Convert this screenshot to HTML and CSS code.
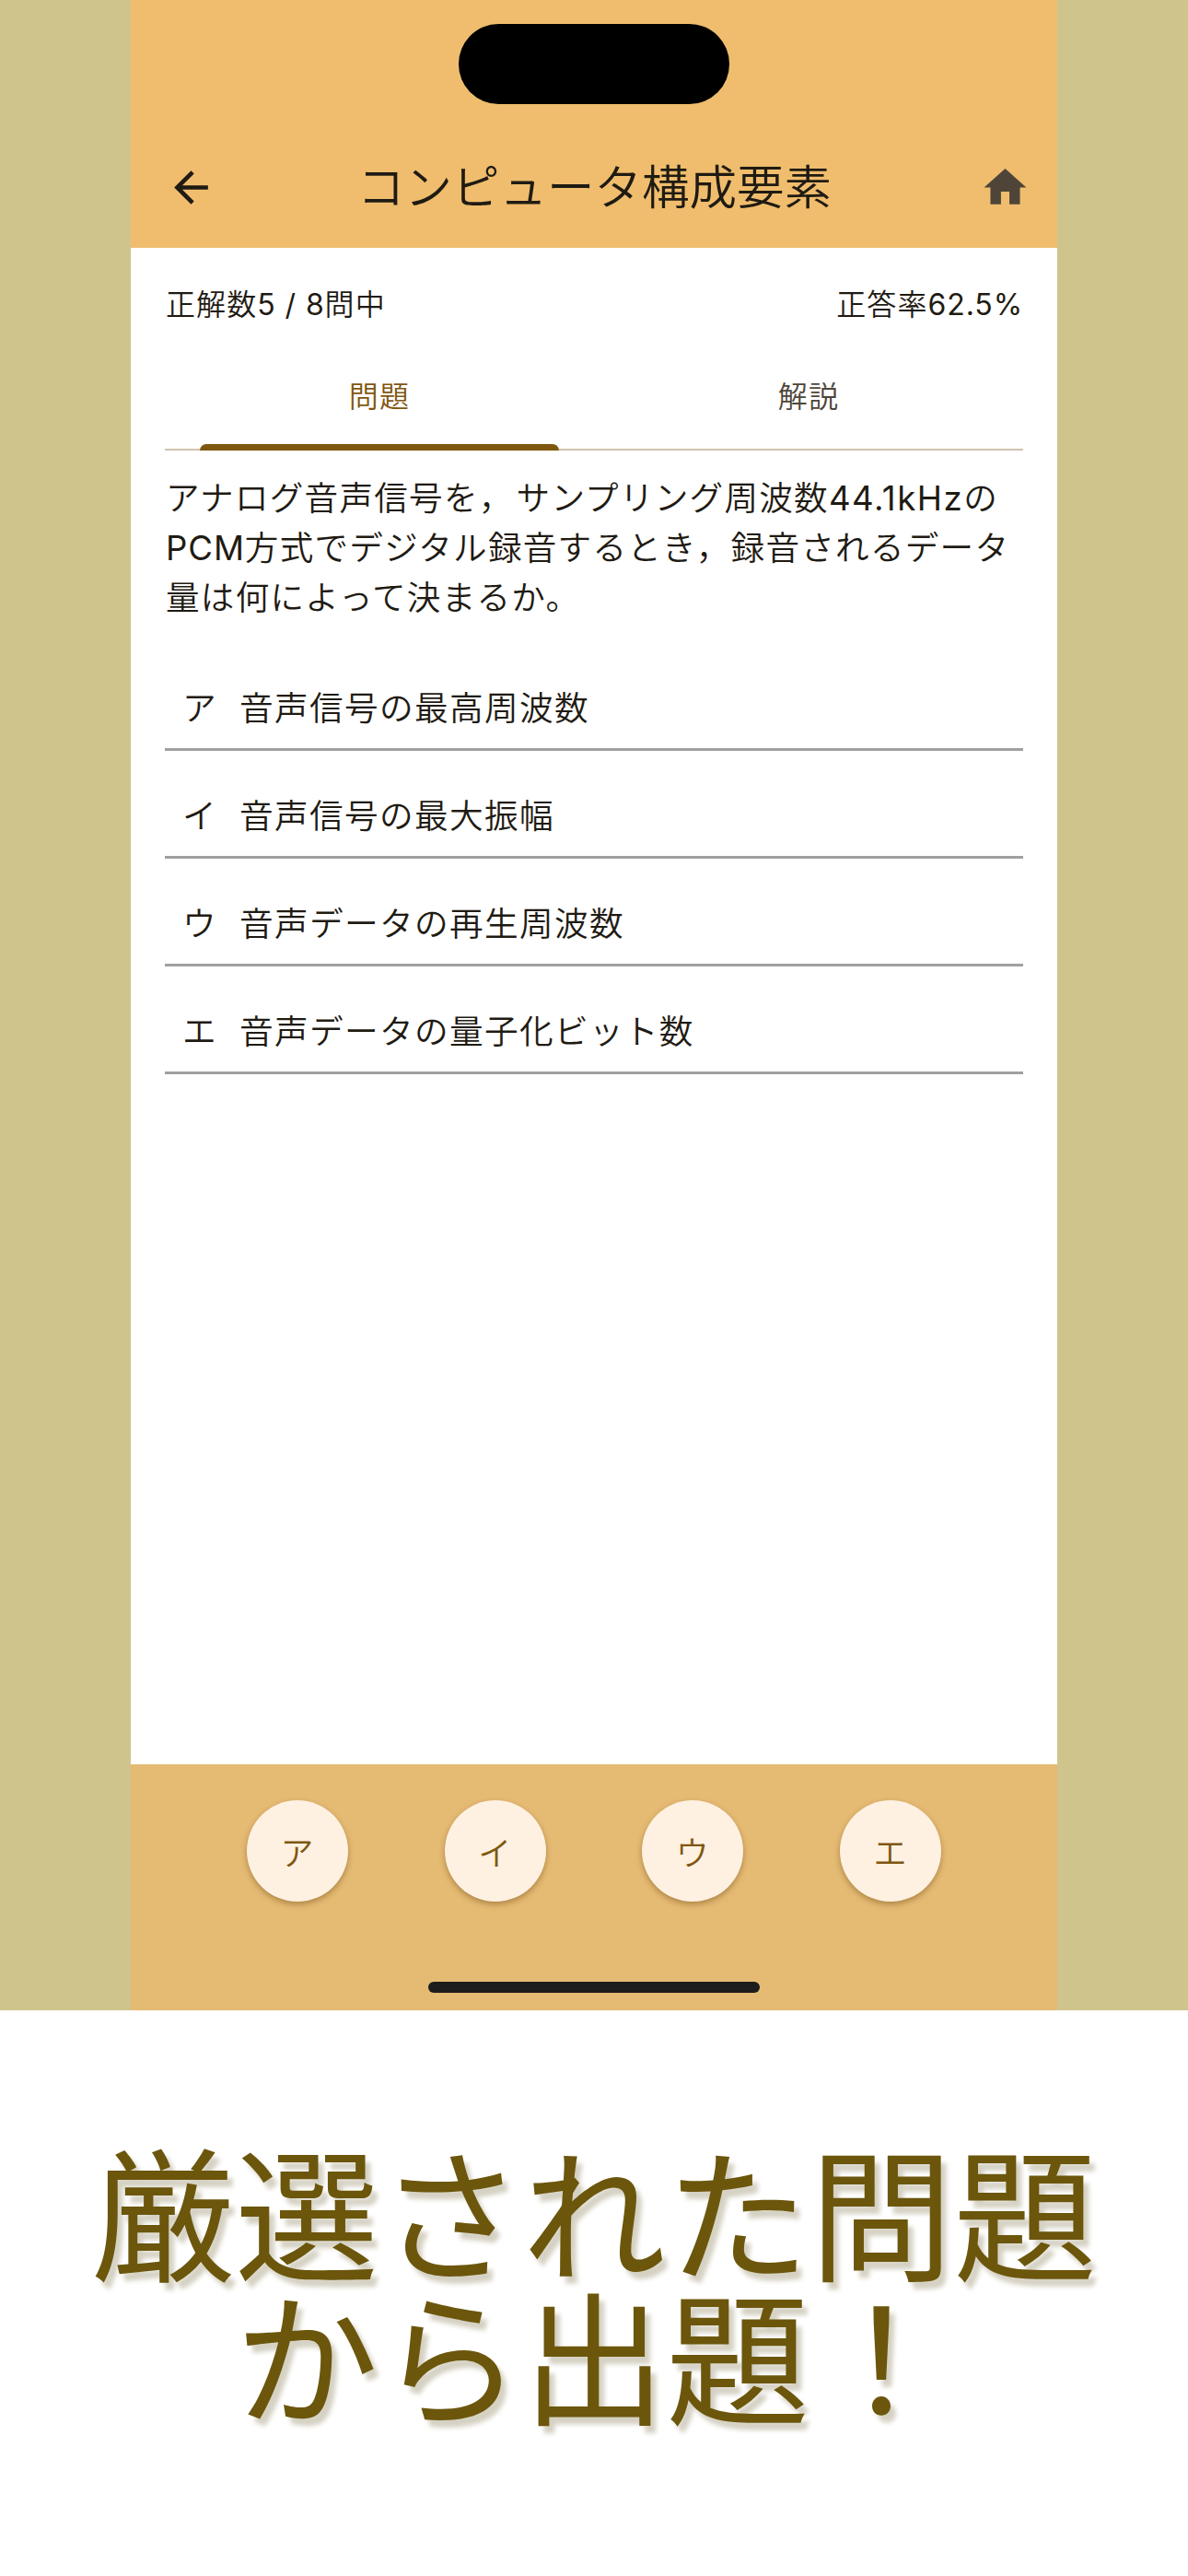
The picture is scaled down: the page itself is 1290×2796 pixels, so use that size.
FILE: index.html
```html
<!DOCTYPE html>
<html lang="ja">
<head>
    <meta charset="UTF-8">
    <meta name="viewport" content="width=device-width, initial-scale=1.0">
    <title>コンピュータ構成要素</title>
    <link rel="stylesheet" href="styles.css">
</head>
<body>
    <div class="stage">
        <div class="phone">
            <header class="app-header">
                <div class="island"></div>
                <div class="app-bar">
                    <svg class="icon" viewBox="0 0 24 24"><path fill="#1f1b13" d="M20 11H7.83l5.59-5.59L12 4l-8 8 8 8 1.41-1.41L7.83 13H20v-2z"/></svg>
                    <h1>コンピュータ構成要素</h1>
                    <svg class="icon" viewBox="0 0 24 24"><path fill="#4e4538" d="M10 20v-6h4v6h5v-8h3L12 3 2 12h3v8z"/></svg>
                </div>
            </header>

            <main class="content">
                <div class="score">
                    <span>正解数<span class="latin">5 / 8</span>問中</span>
                    <span>正答率<span class="latin">62.5%</span></span>
                </div>
                <nav class="tabs">
                    <div class="tab active">問題</div>
                    <div class="tab">解説</div>
                </nav>
                <p class="question">アナログ音声信号を，<span class="shift">サンプリング周波数</span><span class="latin freq">44.1kHz</span>の<br><span class="latin">PCM</span>方式でデジタル録音するとき，録音されるデータ<br>量は何によって決まるか。</p>
                <ul class="options">
                    <li><span class="mark">ア</span><span>音声信号の最高周波数</span></li>
                    <li><span class="mark">イ</span><span>音声信号の最大振幅</span></li>
                    <li><span class="mark">ウ</span><span>音声データの再生周波数</span></li>
                    <li><span class="mark">エ</span><span>音声データの量子化ビット数</span></li>
                </ul>
            </main>

            <footer class="answers">
                <div class="buttons">
                    <button type="button">ア</button>
                    <button type="button">イ</button>
                    <button type="button">ウ</button>
                    <button type="button">エ</button>
                </div>
                <div class="home-indicator"></div>
            </footer>
        </div>
    </div>

    <p class="headline">厳選された問題<br>から出題！</p>
</body>
</html>
```

FILE: styles.css
```css
:root {
    --ink: #1f1b13;
    --brown: #7f570f;
    --header: #efbd6d;
    --footer: #e5ba73;
    --side: #d0c48d;
    --font-family: Inter, "Noto Sans CJK JP", sans-serif;
}

* {
    box-sizing: border-box;
    margin: 0;
    padding: 0;
}

body {
    background: #fff;
    color: var(--ink);
    font-family: var(--font-family);
    font-weight: 350;
}

.stage {
    display: flex;
    justify-content: center;
    height: 2182px;
    background: var(--side);
}

.phone {
    display: flex;
    flex-direction: column;
    width: 1006px;
    background: #fff;
}

/* header */
.app-header {
    height: 269px;
    padding-top: 26px;
    background: var(--header);
}

.island {
    width: 294px;
    height: 87px;
    margin: 0 auto;
    border-radius: 44px;
    background: #000;
}

.app-bar {
    display: flex;
    justify-content: space-between;
    align-items: center;
    height: 56px;
    margin-top: 62px;
    padding: 0 29px 0 38px;
}

.app-bar h1 {
    padding-right: 8px;
    font-size: 51.5px;
    font-weight: 350;
    line-height: 54px;
    white-space: nowrap;
}

.icon {
    width: 55px;
    height: 55px;
}

/* question area */
.content {
    flex: 1;
    padding: 38px 37px 0;
}

.score {
    display: flex;
    justify-content: space-between;
    height: 59px;
    padding-left: 1px;
    font-size: 32px;
    line-height: 47px;
    letter-spacing: 1.1px;
}

.latin {
    font-weight: 400;
    letter-spacing: 0.9px;
}

.tabs {
    display: flex;
    height: 123px;
    border-bottom: 2px solid #d1c3b0;
}

.tab {
    flex: 1;
    position: relative;
    font-size: 32px;
    line-height: 130px;
    letter-spacing: 1.2px;
    text-align: center;
    color: #4e4538;
}

.tab.active {
    color: var(--brown);
}

.tab.active::after {
    content: "";
    position: absolute;
    left: 38px;
    right: 38px;
    bottom: -2px;
    height: 7px;
    border-radius: 7px 7px 0 0;
    background: var(--brown);
}

.question {
    padding: 26px 0 0 1px;
    font-size: 36.6px;
    line-height: 53.8px;
    letter-spacing: 1.25px;
    white-space: nowrap;
}

.shift {
    margin-left: 3px;
}

.freq {
    letter-spacing: 1.5px;
}

.options {
    margin-top: 22px;
    list-style: none;
}

.options li {
    display: flex;
    height: 117px;
    padding: 46px 0 0 19px;
    border-bottom: 3px solid #a0a0a0;
    font-size: 36.7px;
    line-height: 50px;
    letter-spacing: 1.3px;
}

.mark {
    width: 62px;
}

/* answer buttons */
.answers {
    display: flex;
    flex-direction: column;
    align-items: center;
    height: 267px;
    padding-top: 39px;
    background: var(--footer);
}

.buttons {
    display: flex;
    gap: 104.6px;
}

.buttons button {
    width: 110px;
    height: 110px;
    padding-right: 1px;
    border: none;
    border-radius: 50%;
    background: #fef1e2;
    box-shadow: 0 3px 6px rgba(90, 55, 0, 0.4);
    color: var(--brown);
    font-family: var(--font-family);
    font-size: 36px;
    font-weight: 350;
}

.home-indicator {
    width: 360px;
    height: 12px;
    margin-top: 87px;
    border-radius: 6px;
    background: #1c1c1c;
}

/* catch copy */
.headline {
    padding: 136px 0 100px;
    font-family: "Noto Sans CJK JP", sans-serif;
    font-size: 156px;
    font-weight: 400;
    line-height: 156px;
    text-align: center;
    color: #6b560c;
    text-shadow: 6px 8px 5px #d5d1c3;
}
```
